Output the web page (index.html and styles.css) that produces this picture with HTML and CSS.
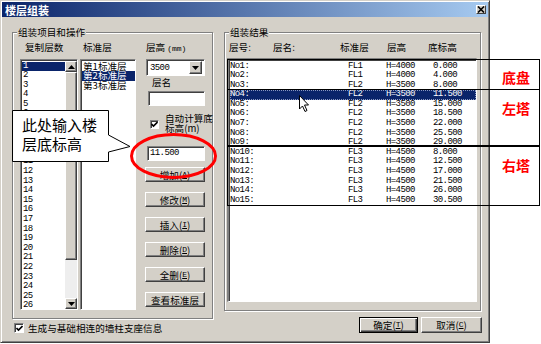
FILE: index.html
```html
<!DOCTYPE html>
<html lang="zh-CN">
<head>
    <meta charset="UTF-8">
    <title>楼层组装</title>
    <link rel="stylesheet" href="styles.css">
</head>
<body>
    <div class="dialog">
        <div class="titlebar">
            <span class="title">楼层组装</span>
            <span class="close">
                <svg width="8" height="7" viewBox="0 0 8 7"><path d="M1 0.5 L7 6.5 M7 0.5 L1 6.5" stroke="#000" stroke-width="1.6"/></svg>
            </span>
        </div>
        <div class="content">
            <div class="col-left">
                <div class="group group-left">
                    <div class="legend"><span>组装项目和操作</span></div>
                    <div class="ops">
                        <div class="col col-copy">
                            <div class="head">复制层数</div>
                            <div class="list list-copy">
                                <div class="items mono">
                                    <div class="item sel">1</div>
                                    <div class="item">2</div>
                                    <div class="item">3</div>
                                    <div class="item">4</div>
                                    <div class="item">5</div>
                                    <div class="item">6</div>
                                    <div class="item">7</div>
                                    <div class="item">8</div>
                                    <div class="item">9</div>
                                    <div class="item">10</div>
                                    <div class="item">11</div>
                                    <div class="item">12</div>
                                    <div class="item">13</div>
                                    <div class="item">14</div>
                                    <div class="item">15</div>
                                    <div class="item">16</div>
                                    <div class="item">17</div>
                                    <div class="item">18</div>
                                    <div class="item">19</div>
                                    <div class="item">20</div>
                                    <div class="item">21</div>
                                    <div class="item">22</div>
                                    <div class="item">23</div>
                                    <div class="item">24</div>
                                    <div class="item">25</div>
                                    <div class="item">26</div>
                                </div>
                                <div class="vscroll">
                                    <div class="sbtn raised">
                                        <svg width="7" height="4" viewBox="0 0 7 4"><path d="M3.5 0 L7 4 L0 4 Z" fill="#000"/></svg>
                                    </div>
                                    <div class="thumb raised"></div>
                                    <div class="track"></div>
                                    <div class="sbtn raised">
                                        <svg width="7" height="4" viewBox="0 0 7 4"><path d="M0 0 L7 0 L3.5 4 Z" fill="#000"/></svg>
                                    </div>
                                </div>
                            </div>
                        </div>
                        <div class="col col-std">
                            <div class="head">标准层</div>
                            <div class="list list-std">
                                <div class="item">第1标准层</div>
                                <div class="item sel">第2标准层</div>
                                <div class="item">第3标准层</div>
                            </div>
                        </div>
                        <div class="col col-ctrl">
                            <div class="head">层高<span class="unit">(mm)</span></div>
                            <div class="combo sunken">
                                <span class="mono">3500</span>
                                <span class="drop raised">
                                    <svg width="7" height="4" viewBox="0 0 7 4"><path d="M0 0 L7 0 L3.5 4 Z" fill="#000"/></svg>
                                </span>
                            </div>
                            <div class="label">层名</div>
                            <div class="field name-field sunken"></div>
                            <div class="check-row auto-calc">
                                <span class="checkbox sunken">
                                    <svg width="7" height="7" viewBox="0 0 7 7"><path d="M0.5 3 L2.5 5 L6.5 1" stroke="#000" stroke-width="1.6" fill="none"/></svg>
                                </span>
                                <span class="check-text">自动计算底<br>标高(m)</span>
                            </div>
                            <div class="field elev-field sunken mono">11.500</div>
                            <div class="btns">
                                <div class="btn raised">增加(<u>A</u>)</div>
                                <div class="btn raised">修改(<u>M</u>)</div>
                                <div class="btn raised">插入(<u>I</u>)</div>
                                <div class="btn raised">删除(<u>D</u>)</div>
                                <div class="btn raised">全删(<u>E</u>)</div>
                                <div class="btn raised">查看标准层</div>
                            </div>
                        </div>
                    </div>
                </div>
                <div class="check-row base-row">
                    <span class="checkbox sunken">
                        <svg width="7" height="7" viewBox="0 0 7 7"><path d="M0.5 3 L2.5 5 L6.5 1" stroke="#000" stroke-width="1.6" fill="none"/></svg>
                    </span>
                    <span class="check-text">生成与基础相连的墙柱支座信息</span>
                </div>
            </div>

            <div class="col-right">
                <div class="group group-right">
                    <div class="legend"><span>组装结果</span></div>
                    <div class="result-head">
                        <span>层号:</span>
                        <span>层名:</span>
                        <span>标准层</span>
                        <span>层高</span>
                        <span>底标高</span>
                    </div>
                    <div class="list result-list sunken mono">
                        <div class="row"><span>No1:</span><span>FL1</span><span>H=4000</span><span>0.000</span></div>
                        <div class="row"><span>No2:</span><span>FL1</span><span>H=4000</span><span>4.000</span></div>
                        <div class="row"><span>No3:</span><span>FL2</span><span>H=3500</span><span>8.000</span></div>
                        <div class="row sel"><span>No4:</span><span>FL2</span><span>H=3500</span><span>11.500</span></div>
                        <div class="row"><span>No5:</span><span>FL2</span><span>H=3500</span><span>15.000</span></div>
                        <div class="row"><span>No6:</span><span>FL2</span><span>H=3500</span><span>18.500</span></div>
                        <div class="row"><span>No7:</span><span>FL2</span><span>H=3500</span><span>22.000</span></div>
                        <div class="row"><span>No8:</span><span>FL2</span><span>H=3500</span><span>25.500</span></div>
                        <div class="row"><span>No9:</span><span>FL2</span><span>H=3500</span><span>29.000</span></div>
                        <div class="row"><span>No10:</span><span>FL3</span><span>H=4500</span><span>8.000</span></div>
                        <div class="row"><span>No11:</span><span>FL3</span><span>H=4500</span><span>12.500</span></div>
                        <div class="row"><span>No12:</span><span>FL3</span><span>H=4500</span><span>17.000</span></div>
                        <div class="row"><span>No13:</span><span>FL3</span><span>H=4500</span><span>21.500</span></div>
                        <div class="row"><span>No14:</span><span>FL3</span><span>H=4500</span><span>26.000</span></div>
                        <div class="row"><span>No15:</span><span>FL3</span><span>H=4500</span><span>30.500</span></div>
                    </div>
                </div>
                <div class="actions">
                    <div class="btn raised btn-default">确定(<u>T</u>)</div>
                    <div class="btn raised btn-cancel">取消(<u>C</u>)</div>
                </div>
            </div>
        </div>
    </div>

    <!-- annotations drawn over the screenshot -->
    <svg class="marks" width="541" height="344" viewBox="0 0 541 344">
        <path d="M12.5 110.5 H108.5 V135 L130 146.5 L108.5 152 V161.5 H12.5 Z" fill="#fff" stroke="#000" stroke-width="1"/>
        <ellipse cx="173.5" cy="156" rx="42" ry="21.5" fill="none" stroke="#f00" stroke-width="3"/>
        <path d="M299.5 95.5 V109 L302.5 106 L305 111.5 L307 110.5 L304.5 105 L308.5 105 Z" fill="#fff" stroke="#000" stroke-width="1"/>
    </svg>
    <div class="callout-text">此处输入楼<br>层底标高</div>

    <div class="zone zone-base"></div>
    <div class="zone zone-left"></div>
    <div class="zone zone-right"></div>
    <div class="zone-label label-base">底盘</div>
    <div class="zone-label label-left">左塔</div>
    <div class="zone-label label-right">右塔</div>
</body>
</html>
```

FILE: styles.css
```css
* {
    box-sizing: border-box;
}

body {
    margin: 0;
    width: 541px;
    height: 344px;
    background: #ffffff;
    position: relative;
    overflow: hidden;
    font-family: "Noto Sans CJK SC", "Liberation Sans", sans-serif;
    font-size: 9.6px;
    color: #000;
}

.mono {
    font-family: "Liberation Mono", "DejaVu Sans Mono", monospace;
    font-size: 9px;
    letter-spacing: -0.6px;
}

/* classic 3d borders */
.raised {
    background: #d4d0c8;
    border: 1px solid;
    border-color: #ffffff #404040 #404040 #ffffff;
    box-shadow: inset -1px -1px 0 #808080;
}

.sunken {
    background: #ffffff;
    border: 1px solid;
    border-color: #808080 #ffffff #ffffff #808080;
    box-shadow: inset 1px 1px 0 #404040;
}

.dialog {
    width: 490px;
    height: 343px;
    background: #d4d0c8;
    border: 1px solid;
    border-color: #d4d0c8 #404040 #404040 #d4d0c8;
    box-shadow: inset 1px 1px 0 #ffffff, inset -1px -1px 0 #808080;
    padding: 1px;
}

.titlebar {
    height: 15px;
    display: flex;
    align-items: center;
    justify-content: space-between;
    padding: 0 2px 0 3px;
    background: linear-gradient(to right, #0a246a, #a6caf0);
}

.title {
    color: #fff;
    font-weight: bold;
    font-size: 11px;
    line-height: 14px;
}

.close {
    width: 10px;
    height: 9px;
    display: flex;
    align-items: center;
    justify-content: center;
    background: #d4d0c8;
    border: 1px solid;
    border-color: #ffffff #404040 #404040 #ffffff;
}

.content {
    display: flex;
    padding: 15px 0 0 10px;
}

.col-left {
    width: 201px;
}

.col-right {
    width: 258px;
    margin-left: 11px;
}

.group {
    border: 1px solid #808080;
    box-shadow: 1px 1px 0 #ffffff, inset 1px 1px 0 #ffffff;
}

.group-left {
    height: 287px;
}

.group-right {
    width: 257px;
    height: 279px;
}

.legend {
    height: 12px;
    line-height: 12px;
    margin-top: -7px;
    padding-left: 4px;
}

.legend span {
    background: #d4d0c8;
    padding: 0 1px;
}

.group-right .legend {
    padding-left: 4px;
}

.ops {
    display: flex;
    padding: 4px 0 0 7px;
}

.head {
    height: 10px;
    line-height: 10px;
    margin-bottom: 7px;
    white-space: nowrap;
}

.unit {
    font-family: "Liberation Mono", monospace;
    font-size: 8px;
    margin-left: 2px;
}

.col-copy {
    width: 58px;
}

.col-copy .head {
    padding-left: 5px;
}

.col-std {
    width: 56px;
    margin-left: 2px;
}

.col-std .head {
    padding-left: 3px;
}

.col-ctrl {
    width: 60px;
    margin-left: 9px;
}

.col-ctrl .head {
    padding-left: 1px;
}

.list {
    height: 251px;
    background: #fff;
    border: 1px solid;
    border-color: #808080 #ffffff #ffffff #808080;
    box-shadow: inset 1px 1px 0 #404040;
    padding: 1px 0 0 1px;
    overflow: hidden;
}

.list-copy {
    display: flex;
}

.items {
    flex: 1;
    padding-top: 0.5px;
}

.item {
    height: 9.6px;
    line-height: 9.6px;
    padding-left: 1px;
    white-space: nowrap;
}

.list-std .item {
    padding-left: 1px;
}

.list-std {
    padding-top: 1.5px;
}

.sel {
    background: #0a246a;
    color: #fff;
}

.vscroll {
    width: 12px;
    display: flex;
    flex-direction: column;
}

.sbtn {
    height: 11px;
    display: flex;
    align-items: center;
    justify-content: center;
}

.thumb {
    height: 188px;
}

.track {
    flex: 1;
    background-color: #eeeeee;
    background-image: radial-gradient(#d4d0c8 0.6px, transparent 0.7px);
    background-size: 2px 2px;
}

.combo {
    height: 17px;
    width: 59px;
    margin-left: 1px;
    display: flex;
    align-items: center;
    justify-content: space-between;
    padding: 2px 2px 2px 3px;
}

.drop {
    width: 13px;
    height: 13px;
    display: flex;
    align-items: center;
    justify-content: center;
}

.label {
    height: 10px;
    line-height: 10px;
    margin: 1px 0 0 7px;
}

.field {
    height: 15px;
    line-height: 13px;
    padding-left: 3px;
}

.name-field {
    width: 57px;
    margin: 4px 0 0 3px;
}

.check-row {
    display: flex;
    align-items: flex-start;
    white-space: nowrap;
}

.auto-calc {
    height: 20px;
    margin-top: 7px;
}

.auto-calc .checkbox {
    margin: 7px 0 0 5px;
}

.auto-calc .check-text {
    line-height: 10px;
    margin-left: 6px;
}

.checkbox {
    width: 9px;
    height: 9px;
    flex: none;
    display: flex;
    align-items: center;
    justify-content: center;
}

.elev-field {
    width: 58px;
    margin: 13px 0 0 2px;
    padding-left: 2px;
}

.btns {
    display: flex;
    flex-direction: column;
    gap: 10px;
    margin-top: 6px;
}

.btn {
    height: 15px;
    display: flex;
    align-items: center;
    justify-content: center;
    white-space: nowrap;
    line-height: 10px;
}

.btn u {
    font-family: "Liberation Mono", monospace;
    font-size: 8px;
}

.base-row {
    margin-top: 4px;
    align-items: center;
    height: 10px;
}

.base-row .checkbox {
    width: 10px;
    height: 10px;
    margin-left: 2px;
}

.base-row .check-text {
    margin-left: 4px;
    line-height: 10px;
}

.result-head {
    display: grid;
    grid-template-columns: 44px 67px 47px 41px auto;
    height: 10px;
    line-height: 10px;
    margin-top: 4px;
    padding-left: 4px;
}

.result-list {
    width: 250px;
    height: 244px;
    margin: 6px 0 0 2px;
    padding: 1.5px 0 0 1px;
    border-width: 2px 1px 1px 2px;
}

.row {
    display: grid;
    grid-template-columns: 118px 38px 47px auto;
    height: 9.6px;
    line-height: 9.6px;
    padding-left: 0;
    white-space: nowrap;
}

.row.sel {
    outline: 1px dotted #8a98c0;
    outline-offset: -1px;
}

.actions {
    display: flex;
    justify-content: flex-end;
    gap: 3px;
    margin-top: 6px;
}

.actions .btn {
    height: 16px;
}

.btn-default {
    width: 59px;
    border: 1px solid #000;
    box-shadow: inset 1px 1px 0 #ffffff, inset -1px -1px 0 #404040, inset -2px -2px 0 #808080;
}

.btn-cancel {
    width: 61px;
}

/* overlays */
.marks {
    position: absolute;
    left: 0;
    top: 0;
}

.callout-text {
    position: absolute;
    left: 22px;
    top: 115px;
    font-size: 15px;
    line-height: 19px;
    white-space: nowrap;
}

.zone {
    position: absolute;
    left: 227px;
    width: 313px;
    border: 1px solid #000;
}

.zone-base {
    top: 59px;
    height: 31px;
}

.zone-left {
    top: 89px;
    height: 58px;
}

.zone-right {
    top: 145px;
    height: 61px;
    border-top-width: 2px;
}

.zone-label {
    position: absolute;
    left: 502px;
    color: #ff0000;
    font-weight: bold;
    font-size: 14px;
    line-height: 14px;
}

.label-base {
    top: 70px;
}

.label-left {
    top: 101px;
}

.label-right {
    top: 158px;
}
```
